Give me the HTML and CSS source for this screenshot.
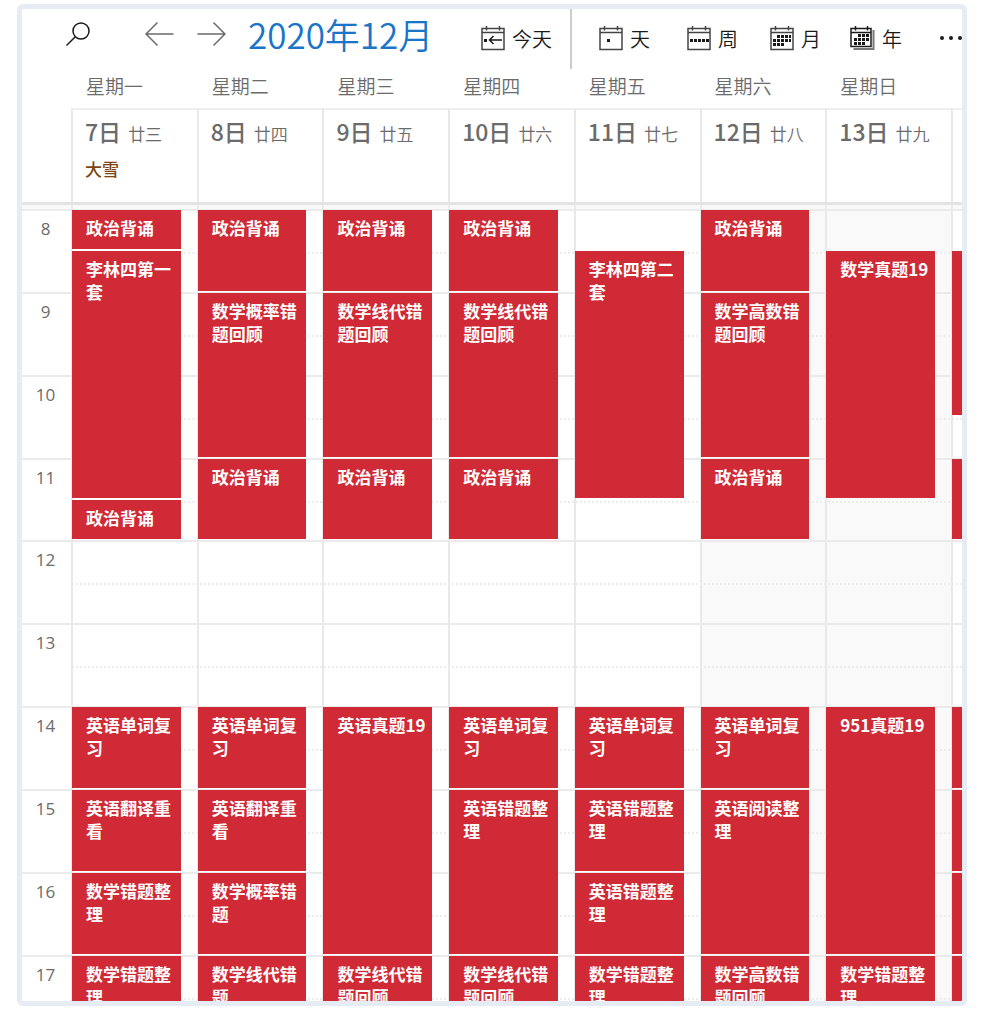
FILE: index.html
```html
<!DOCTYPE html>
<html lang="zh-CN">
<head>
<meta charset="utf-8">
<title>2020年12月</title>
<link rel="stylesheet" href="styles.css">
</head>
<body>
<main class="calendar">
  <header class="toolbar">
    <button class="icon-btn search" aria-label="搜索"><svg width="24" height="26" viewBox="0 0 24 26"><circle cx="15" cy="9" r="8"/><path d="M9.3 14.7 0.5 23.5"/></svg></button>
    <div class="pager">
      <button class="icon-btn" aria-label="上一周"><svg width="29" height="26" viewBox="0 0 29 26"><path d="M12.5 1.5 1 13l11.500 11.500M1 13H28.500"/></svg></button>
      <button class="icon-btn" aria-label="下一周"><svg width="29" height="26" viewBox="0 0 29 26"><path d="M16.500 1.500 28 13 16.500 24.500M28 13H.5"/></svg></button>
    </div>
    <h1 class="title">2020年12月</h1>
    <button class="tool today"><svg width="24" height="26" viewBox="0 0 24 26"><path class="frame" d="M1 3.500H23V24.500H1ZM1 7.500H23M5.500 1V5.500M18.500 1V5.500"/><path d="M12.500 11 8.500 15l4 4M8.500 15H21"/><path class="dot" d="M3 14h3v3H3z"/></svg>今天</button>
    <nav class="views" aria-label="视图">
      <button class="tool"><svg width="24" height="26" viewBox="0 0 24 26"><path class="frame" d="M1 3.500H23V24.500H1ZM1 7.500H23M5.500 1V5.500M18.500 1V5.500"/><path class="dot" d="M8 14h3v3H8z"/></svg>天</button>
      <button class="tool"><svg width="24" height="26" viewBox="0 0 24 26"><path class="frame" d="M1 3.500H23V24.500H1ZM1 7.500H23M5.500 1V5.500M18.500 1V5.500"/><path class="dot" d="M3 14h3v3H3zM7 14h3v3H7zM11 14h3v3h-3zM15 14h3v3h-3zM19 14h3v3h-3z"/></svg>周</button>
      <button class="tool"><svg width="24" height="26" viewBox="0 0 24 26"><path class="frame" d="M1 3.500H23V24.500H1ZM1 7.500H23M5.500 1V5.500M18.500 1V5.500"/><path class="dot" d="M7 10h3v3H7zM11 10h3v3h-3zM15 10h3v3h-3zM19 10h2v3h-2zM3 14h3v3H3zM7 14h3v3H7zM11 14h3v3h-3zM15 14h3v3h-3zM19 14h2v3h-2zM3 18h3v3H3zM7 18h3v3H7zM11 18h3v3h-3z"/></svg>月</button>
      <button class="tool"><svg width="25" height="26" viewBox="0 0 25 26"><path d="M1 3.500H21V21.500H1ZM1 7.500H21M5.500 1V5.500M17.500 1V5.500"/><path class="shade" d="M23.500 5V24H3.500"/><path class="dot" d="M8 9h3v3H8zM12 9h3v3h-3zM16 9h3v3h-3zM4 13h3v3H4zM8 13h3v3H8zM12 13h3v3h-3zM16 13h3v3h-3zM4 17h3v3H4zM8 17h3v3H8zM12 17h3v3h-3z"/></svg>年</button>
      <button class="icon-btn more" aria-label="更多"><svg width="24" height="26" viewBox="0 0 24 26"><g class="dot"><circle cx="4" cy="12" r="2"/><circle cx="13" cy="12" r="2"/><circle cx="22" cy="12" r="2"/></g></svg></button>
    </nav>
  </header>

  <div class="columns weekdays">
    <span></span><span>星期一</span><span>星期二</span><span>星期三</span><span>星期四</span><span>星期五</span><span>星期六</span><span>星期日</span>
  </div>

  <div class="columns dates">
    <div class="corner"></div>
    <div class="date"><p><b>7日</b>廿三</p><p class="term">大雪</p></div>
    <div class="date"><p><b>8日</b>廿四</p></div>
    <div class="date"><p><b>9日</b>廿五</p></div>
    <div class="date"><p><b>10日</b>廿六</p></div>
    <div class="date"><p><b>11日</b>廿七</p></div>
    <div class="date"><p><b>12日</b>廿八</p></div>
    <div class="date"><p><b>13日</b>廿九</p></div>
    <div class="date"></div>
  </div>

  <div class="columns all-day"><i></i><i></i><i></i><i></i><i></i><i></i><i></i><i></i><i></i></div>

  <div class="viewport">
    <div class="columns schedule">
      <div class="weekend"></div>
      <div class="hour" style="grid-row: 1 / span 2">8</div>
      <div class="hour" style="grid-row: 3 / span 2">9</div>
      <div class="hour" style="grid-row: 5 / span 2">10</div>
      <div class="hour" style="grid-row: 7 / span 2">11</div>
      <div class="hour" style="grid-row: 9 / span 2">12</div>
      <div class="hour" style="grid-row: 11 / span 2">13</div>
      <div class="hour" style="grid-row: 13 / span 2">14</div>
      <div class="hour" style="grid-row: 15 / span 2">15</div>
      <div class="hour" style="grid-row: 17 / span 2">16</div>
      <div class="hour" style="grid-row: 19 / span 2">17</div>

      <section class="day" style="grid-column: 2">
        <article class="event" style="grid-row: 1 / span 1">政治背诵</article>
        <article class="event" style="grid-row: 2 / span 6">李林四第一套</article>
        <article class="event" style="grid-row: 8 / span 1">政治背诵</article>
        <article class="event" style="grid-row: 13 / span 2">英语单词复习</article>
        <article class="event" style="grid-row: 15 / span 2">英语翻译重看</article>
        <article class="event" style="grid-row: 17 / span 2">数学错题整理</article>
        <article class="event" style="grid-row: 19 / span 2">数学错题整理</article>
      </section>
      <section class="day" style="grid-column: 3">
        <article class="event" style="grid-row: 1 / span 2">政治背诵</article>
        <article class="event" style="grid-row: 3 / span 4">数学概率错题回顾</article>
        <article class="event" style="grid-row: 7 / span 2">政治背诵</article>
        <article class="event" style="grid-row: 13 / span 2">英语单词复习</article>
        <article class="event" style="grid-row: 15 / span 2">英语翻译重看</article>
        <article class="event" style="grid-row: 17 / span 2">数学概率错题</article>
        <article class="event" style="grid-row: 19 / span 2">数学线代错题</article>
      </section>
      <section class="day" style="grid-column: 4">
        <article class="event" style="grid-row: 1 / span 2">政治背诵</article>
        <article class="event" style="grid-row: 3 / span 4">数学线代错题回顾</article>
        <article class="event" style="grid-row: 7 / span 2">政治背诵</article>
        <article class="event" style="grid-row: 13 / span 6">英语真题19</article>
        <article class="event" style="grid-row: 19 / span 2">数学线代错题回顾</article>
      </section>
      <section class="day" style="grid-column: 5">
        <article class="event" style="grid-row: 1 / span 2">政治背诵</article>
        <article class="event" style="grid-row: 3 / span 4">数学线代错题回顾</article>
        <article class="event" style="grid-row: 7 / span 2">政治背诵</article>
        <article class="event" style="grid-row: 13 / span 2">英语单词复习</article>
        <article class="event" style="grid-row: 15 / span 4">英语错题整理</article>
        <article class="event" style="grid-row: 19 / span 2">数学线代错题回顾</article>
      </section>
      <section class="day" style="grid-column: 6">
        <article class="event" style="grid-row: 2 / span 6">李林四第二套</article>
        <article class="event" style="grid-row: 13 / span 2">英语单词复习</article>
        <article class="event" style="grid-row: 15 / span 2">英语错题整理</article>
        <article class="event" style="grid-row: 17 / span 2">英语错题整理</article>
        <article class="event" style="grid-row: 19 / span 2">数学错题整理</article>
      </section>
      <section class="day" style="grid-column: 7">
        <article class="event" style="grid-row: 1 / span 2">政治背诵</article>
        <article class="event" style="grid-row: 3 / span 4">数学高数错题回顾</article>
        <article class="event" style="grid-row: 7 / span 2">政治背诵</article>
        <article class="event" style="grid-row: 13 / span 2">英语单词复习</article>
        <article class="event" style="grid-row: 15 / span 4">英语阅读整理</article>
        <article class="event" style="grid-row: 19 / span 2">数学高数错题回顾</article>
      </section>
      <section class="day" style="grid-column: 8">
        <article class="event" style="grid-row: 2 / span 6">数学真题19</article>
        <article class="event" style="grid-row: 13 / span 6">951真题19</article>
        <article class="event" style="grid-row: 19 / span 2">数学错题整理</article>
      </section>
      <section class="day next" style="grid-column: 9">
        <article class="event" style="grid-row: 2 / span 4"></article>
        <article class="event" style="grid-row: 7 / span 2"></article>
        <article class="event" style="grid-row: 13 / span 2"></article>
        <article class="event" style="grid-row: 15 / span 2"></article>
        <article class="event" style="grid-row: 17 / span 2"></article>
        <article class="event" style="grid-row: 19 / span 2"></article>
      </section>
    </div>
  </div>
</main>
</body>
</html>
```

FILE: styles.css
```css
* { box-sizing: border-box; }

body {
  margin: 0;
  background: #fff;
  color: #6b6b6b;
  font-family: "Noto Sans CJK SC", sans-serif;
}

p, h1 { margin: 0; }

.calendar {
  display: flex;
  flex-direction: column;
  height: calc(100vh - 13px);
  margin: 4px 28px 9px 17px;
  border: 5px solid #e6ecf3;
  border-radius: 6px;
  overflow: hidden;
}

button {
  padding: 0;
  border: 0;
  background: none;
  color: #1a1a1a;
  font: inherit;
}

svg {
  display: block;
  flex: none;
  fill: none;
  stroke: currentColor;
  stroke-width: 1.5;
}

.frame { stroke: #444; }
.dot { fill: currentColor; stroke: none; }
.shade { stroke: #777; stroke-width: 2; }

.toolbar {
  display: flex;
  flex: none;
  align-items: center;
  height: 60px;
  padding-left: 44px;
}

.search { margin: 0 55px 8px 0; }

.pager {
  display: flex;
  gap: 23px;
  margin: 0 22px 10px 0;
}

.pager button { color: #6b6b6b; }

.title {
  flex: 1;
  color: #1a74c8;
  font-size: 35px;
  font-weight: 350;
  line-height: 52px;
  white-space: nowrap;
  padding-bottom: 10px;
}

.tool {
  display: flex;
  align-items: center;
  gap: 7px;
  font-size: 20px;
  line-height: 28px;
  font-weight: 350;
  white-space: nowrap;
}

.tool svg { margin-bottom: 3px; }

.today { margin-right: 18px; }

.views {
  display: grid;
  grid-template-columns: 88px 83px 80px 88px 24px;
  align-items: center;
  align-self: stretch;
  padding-left: 27px;
  border-left: 2px solid #ccc;
}

.columns {
  display: grid;
  grid-template-columns: 49px repeat(7, minmax(0, 1fr)) 11px;
  flex: none;
}

.weekdays {
  height: 39px;
  font-size: 19px;
  font-weight: 350;
  line-height: 34px;
}

.weekdays span { padding-left: 15px; }

.dates {
  height: 97px;
  border-bottom: 3px solid #e4e4e4;
}

.date {
  padding: 9px 0 0 12px;
  border-top: 2px solid #efefef;
  border-left: 2px solid #e9e9e9;
  font-size: 17px;
  font-weight: 350;
  line-height: 24px;
  white-space: nowrap;
}

.date b {
  margin-right: 7px;
  font-size: 23px;
  font-weight: 500;
}

.date .term {
  padding-top: 11px;
  color: #7a4510;
  font-weight: 500;
}

.all-day { height: 4px; background: #f9f9f9; }
.all-day i + i { border-left: 2px solid #ebebeb; }

.viewport { flex: 1; min-height: 0; overflow: hidden; }

.schedule {
  height: 994px;
  grid-template-rows: repeat(24, 1fr);
}

.weekend { grid-area: 1 / 7 / -1 / 9; background: #f9f9f9; }

.hour {
  display: grid;
  grid-column: 1 / -1;
  grid-template-columns: 47px 3px 1fr;
  border-top: 2px solid #ebebeb;
  font-family: "Open Sans", sans-serif;
  font-size: 17px;
  line-height: 35px;
  text-align: center;
}

.hour::after {
  content: "";
  grid-column: 3;
  height: 41px;
  border-bottom: 2px dotted #ededed;
}

.day {
  display: grid;
  grid-row: 1 / -1;
  grid-template-rows: subgrid;
  border-left: 2px solid #e9e9e9;
}

.event {
  margin: 1px 16px 1px -1px;
  padding: 6px 2px 0 14px;
  min-height: 0;
  overflow: hidden;
  background: #cf2a35;
  color: #fff;
  font-size: 17px;
  font-weight: 600;
  line-height: 23px;
}

.next .event { margin-right: 0; padding: 0; }
```
